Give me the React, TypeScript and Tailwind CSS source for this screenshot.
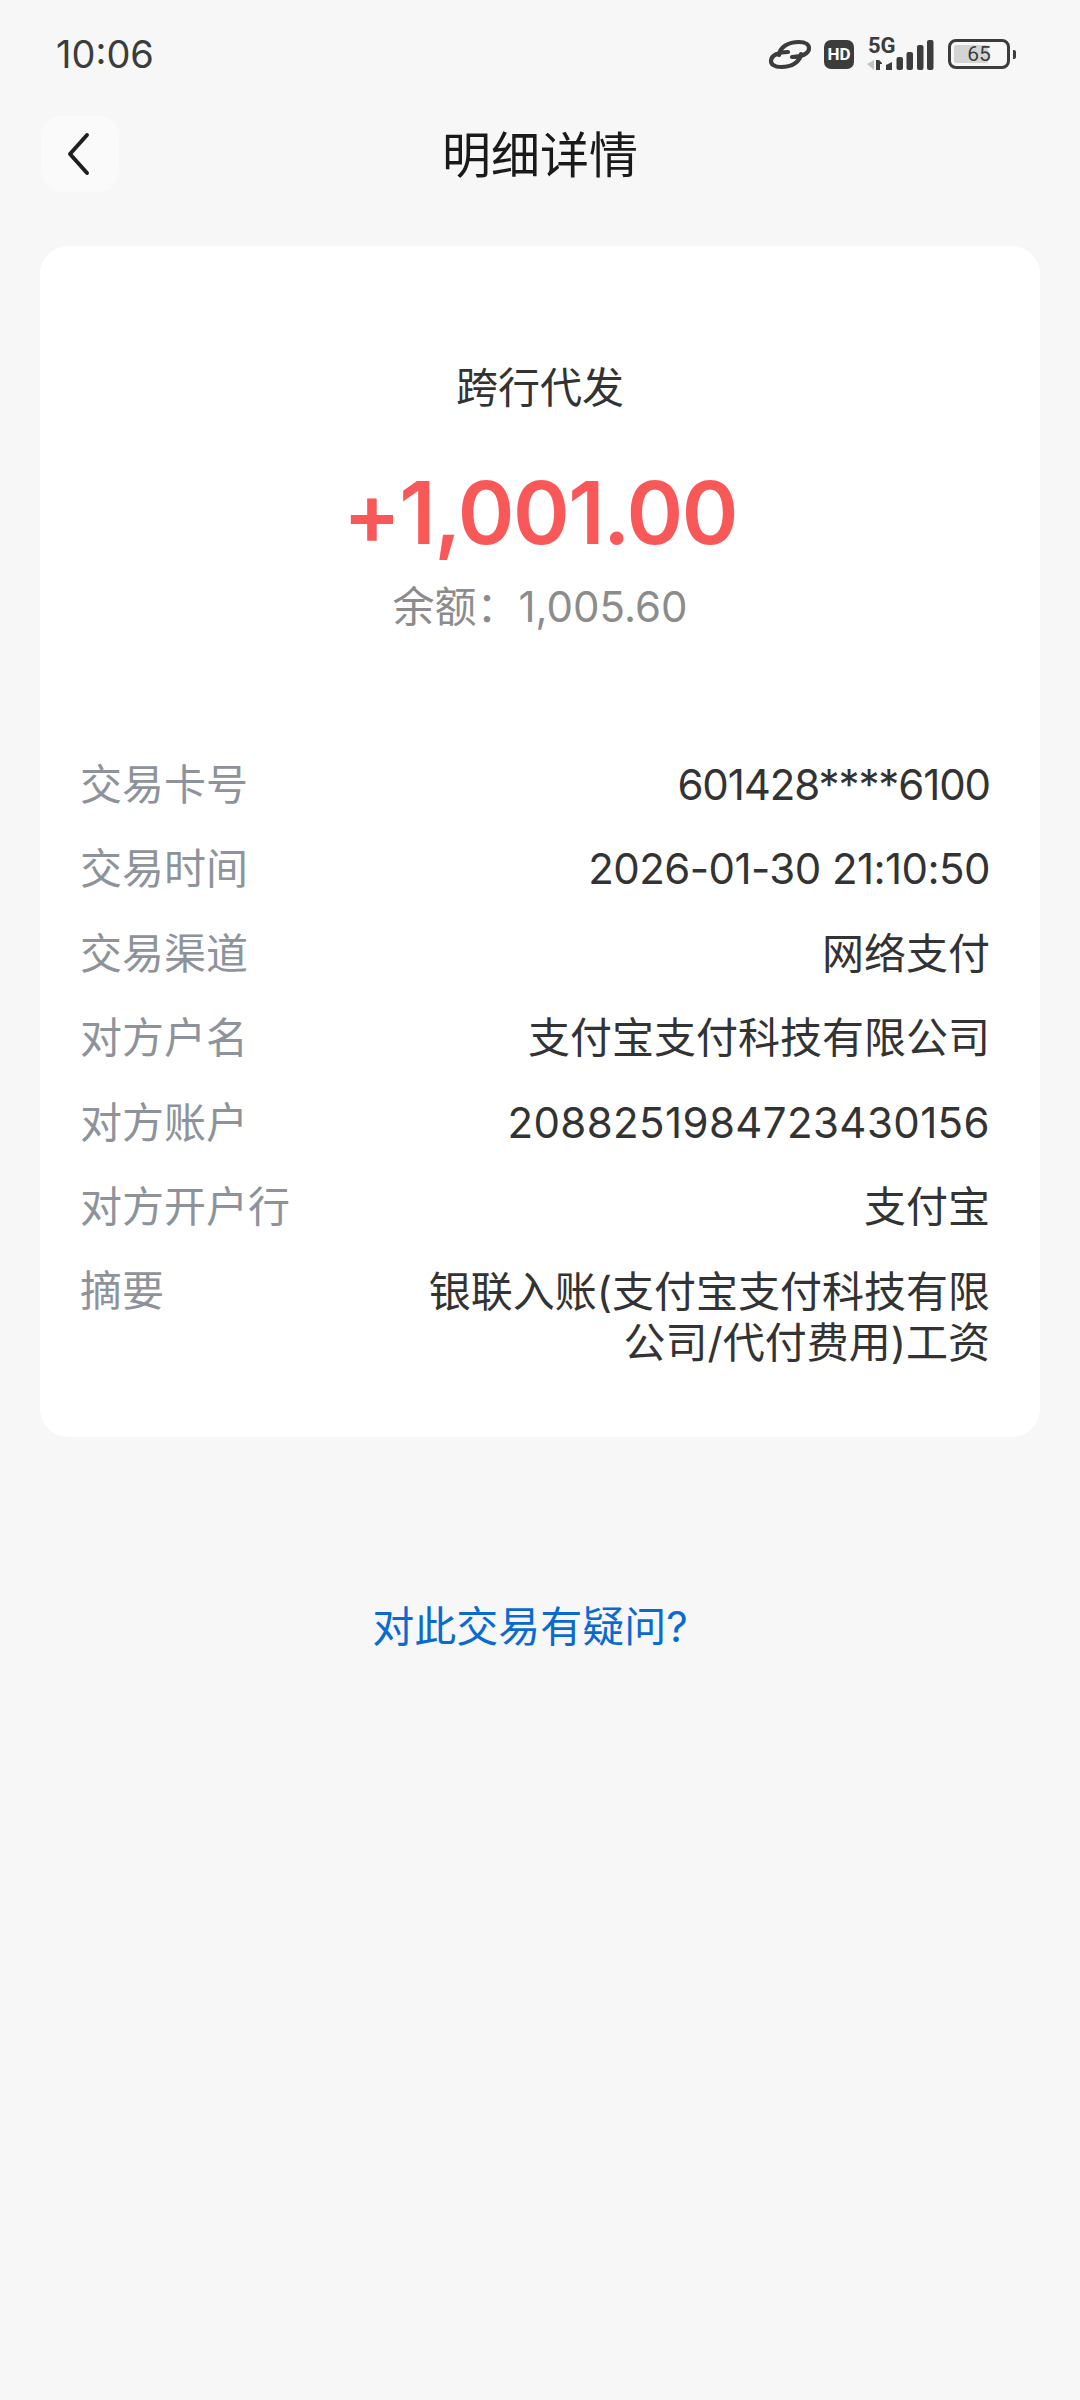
import React from "react";

const FONT = "font-['Inter','Noto_Sans_CJK_SC',sans-serif]";

// tracking per row: the digits and punctuation of the original font have other widths than Inter
const rows = [
  ["交易卡号", "601428****6100", "tracking-[-1.1px]"],
  ["交易时间", "2026-01-30 21:10:50", "tracking-[-0.55px]"],
  ["交易渠道", "网络支付", ""],
  ["对方户名", "支付宝支付科技有限公司", ""],
  ["对方账户", "2088251984723430156", "tracking-[0.4px]"],
  ["对方开户行", "支付宝", ""],
];

const StatusIcons = () => (
  <div className="flex items-center">
    {/* link */}
    <svg width="44" height="34" viewBox="0 0 44 34" fill="none" stroke="#3c3c3c" strokeWidth="4.2" strokeLinecap="round">
      <path d="M11 18C12 10 20 5 31 5C38 5 41 8 41 11C41 17 33 20 24 20" />
      <path d="M33 17C32 25 24 30 13 30C6 30 3 27 3 24C3 18 11 15 20 15" />
    </svg>
    {/* HD */}
    <div className="ml-[12px] flex h-[29px] w-[30px] items-center justify-center rounded-[7px] bg-[#3c3c3c] font-['Roboto',sans-serif] text-[17px] leading-none font-bold text-white">
      HD
    </div>
    {/* 5G + signal */}
    <svg className="ml-[13px] overflow-visible" width="67" height="36" viewBox="0 0 67 36">
      <text x="1" y="17" fontFamily="Roboto, sans-serif" fontSize="22" fontWeight="700" fill="#3c3c3c">5G</text>
      <path d="M0 28l7-4v10z" fill="#c4c4c4" />
      <path d="M9 24h3l3 3v1h-2v6h-4z" fill="#3c3c3c" />
      <path d="M19 34v-5l6-3v8z" fill="#3c3c3c" />
      <rect x="29.5" y="21" width="6.5" height="13" rx="2" fill="#3c3c3c" />
      <rect x="39.5" y="16" width="6.5" height="18" rx="2" fill="#3c3c3c" />
      <rect x="50" y="9" width="6.5" height="25" rx="2" fill="#3c3c3c" />
      <rect x="60" y="4" width="6.5" height="30" rx="2" fill="#3c3c3c" />
    </svg>
    {/* battery */}
    <div className="ml-[14px] flex items-center">
      <div className="relative h-[30px] w-[62px] rounded-[8px] border-[3px] border-[#3c3c3c]">
        <div className="absolute top-[3px] bottom-[3px] left-[3px] w-[34px] rounded-[2px] bg-[#d4d4d4]" />
        <div className="relative flex h-full items-center justify-center font-['Roboto',sans-serif] text-[21px] leading-none text-[#3c3c3c]">
          65
        </div>
      </div>
      <div className="ml-[3px] h-[9px] w-[3px] rounded-r-[2px] bg-[#3c3c3c]" />
    </div>
  </div>
);

export default function App() {
  return (
    <div className={`flex h-[2400px] w-[1080px] flex-col bg-[#f7f7f7] ${FONT}`}>
      {/* Status bar */}
      <div className="flex h-[108px] shrink-0 items-center justify-between pr-[64px] pl-[56px]">
        <span className="text-[38px] leading-none text-[#3c3c3c]">10:06</span>
        <StatusIcons />
      </div>

      {/* Title bar */}
      <div className="relative mt-[8px] flex h-[76px] shrink-0 items-center justify-center">
        <div className="absolute top-0 left-[41px] flex h-[76px] w-[78px] items-center justify-center rounded-[20px] bg-[#fafafa]">
          <svg className="mr-[4px]" width="30" height="44" viewBox="0 0 30 44" fill="none" stroke="#1f1f1f" strokeWidth="4" strokeLinecap="round" strokeLinejoin="round">
            <path d="M24 3L7 22l17 19" />
          </svg>
        </div>
        <h1 className="mt-[2px] text-[49px] leading-none font-normal text-[#1a1a1a]">明细详情</h1>
      </div>

      {/* Detail card */}
      <div className="mx-[40px] mt-[54px] h-[1191px] rounded-[28px] bg-white pt-[117px] pr-[50px] pl-[40px]">
        <div className="flex flex-col items-center pl-[10px]">
          <div className="text-[42px] leading-[50px] text-[#333333]">跨行代发</div>
          <div className="mt-[46px] text-[86px] leading-[108px] font-semibold tracking-[-1.5px] text-[#f95858]">+1,001.00</div>
          <div className="mt-[15px] text-[42px] leading-[50px] text-[#8c8c8c]">余额：1,005.60</div>
        </div>

        <div className="mt-[128px] flex flex-col">
          {rows.map(([label, value, tracking]) => (
            <div key={label} className="flex h-[84.4px] items-start justify-between">
              <span className="text-[42px] leading-[50px] text-[#8e939b]">{label}</span>
              <span className={`text-[42px] leading-[50px] text-[#333333] ${tracking}`}>{value}</span>
            </div>
          ))}
          <div className="flex items-start justify-between">
            <span className="text-[42px] leading-[50px] text-[#8e939b]">摘要</span>
            <span className="w-[570px] text-right text-[42px] leading-[51px] text-[#333333]">
              银联入账(支付宝支付科技有限公司/代付费用)工资
            </span>
          </div>
        </div>
      </div>

      {/* Help link */}
      <div className="mt-[165px] pr-[20px] text-center text-[42px] leading-[50px] text-[#0a6ad2]">对此交易有疑问?</div>
    </div>
  );
}
